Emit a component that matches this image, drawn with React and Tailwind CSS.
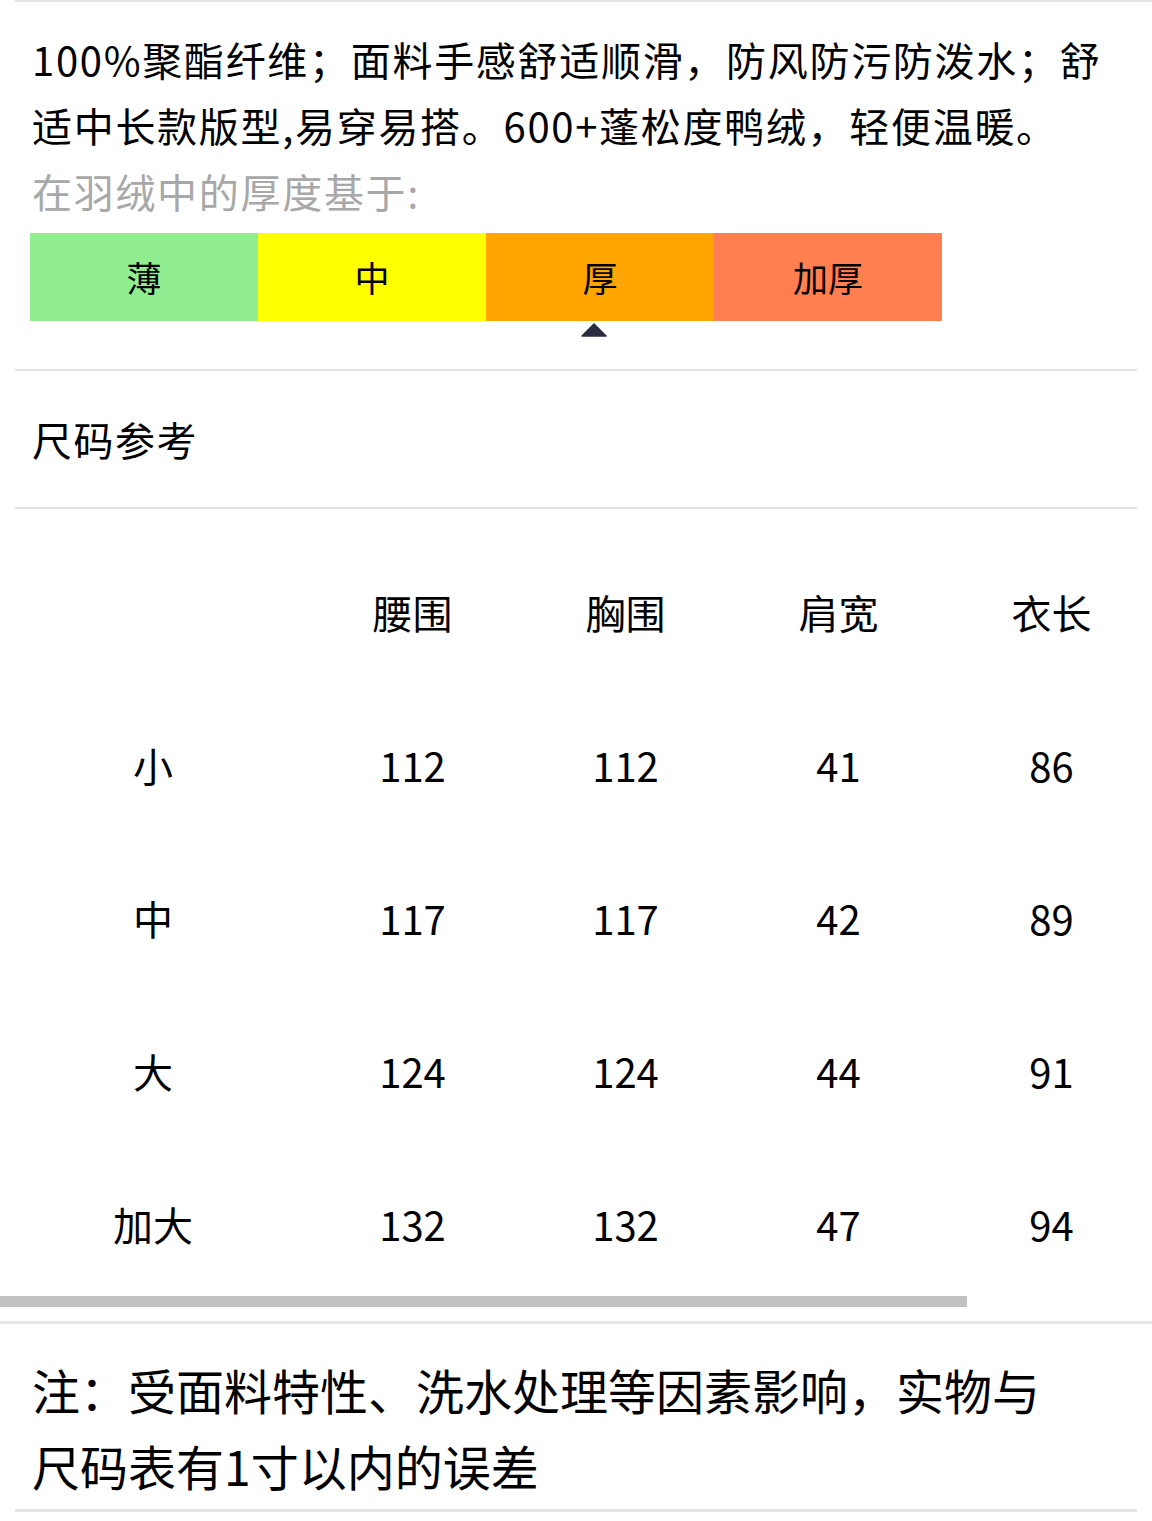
const font = { fontFamily: '"Noto Sans CJK SC", "Noto Sans", sans-serif' };

const levels = [
  { label: "薄", color: "bg-[#90ee90]" },
  { label: "中", color: "bg-[#ffff00]" },
  { label: "厚", color: "bg-[#ffa500]" },
  { label: "加厚", color: "bg-[#ff7f50]" },
];

const headers = ["", "腰围", "胸围", "肩宽", "衣长"];
const rows = [
  ["小", "112", "112", "41", "86"],
  ["中", "117", "117", "42", "89"],
  ["大", "124", "124", "44", "91"],
  ["加大", "132", "132", "47", "94"],
];

function Row({ cells }) {
  return (
    <div className="flex h-[153px] items-center">
      {cells.map((c, i) => (
        <div
          key={i}
          className={`${i === 0 ? "w-[306px]" : "w-[213px]"} shrink-0 text-center`}
        >
          {c}
        </div>
      ))}
    </div>
  );
}

export default function App() {
  return (
    <div className="w-[1152px] bg-white text-black" style={font}>
      <div className="ml-[15px] h-[2px] bg-[#e3e3e3]" />

      <div className="px-[32px] pt-[24px] text-[40px] leading-[66px] tracking-[1.7px]">
        <div className="whitespace-nowrap">100%聚酯纤维；面料手感舒适顺滑，防风防污防泼水；舒</div>
        <div className="whitespace-nowrap">适中长款版型,易穿易搭。600+蓬松度鸭绒，轻便温暖。</div>
        <div className="whitespace-nowrap text-[#a8a8a8]">在羽绒中的厚度基于:</div>
      </div>

      <div className="ml-[30px] mt-[9px] flex w-[912px]">
        {levels.map((l) => (
          <div
            key={l.label}
            className={`${l.color} flex h-[88px] w-[228px] items-center justify-center text-[35px]`}
          >
            {l.label}
          </div>
        ))}
      </div>
      <div className="ml-[580px] mt-[2px] h-[14px] w-[28px]">
        <svg width="28" height="14" viewBox="0 0 28 14">
          <path d="M14 1 L26 13 L2 13 Z" fill="#2b2d42" stroke="#2b2d42" strokeWidth="1.5" strokeLinejoin="round" />
        </svg>
      </div>

      <div className="mx-[15px] mt-[32px] h-[2px] bg-[#e3e3e3]" />
      <div className="flex h-[136px] items-center px-[32px] text-[40px] tracking-[1.5px]">尺码参考</div>
      <div className="mx-[15px] h-[2px] bg-[#e3e3e3]" />

      <div className="overflow-hidden pt-[26px] text-[40px]">
        <div className="w-[1372px]">
          <Row cells={headers} />
          {rows.map((r) => (
            <Row key={r[0]} cells={r} />
          ))}
        </div>
      </div>
      <div className="-mt-[4px] h-[11px] w-[967px] bg-[#c1c1c1]" />

      <div className="mt-[14px] h-[3px] bg-[#e6e6e6]" />
      <div className="px-[32px] pt-[27px] text-[48px] leading-[76px]">
        <div className="whitespace-nowrap">注：受面料特性、洗水处理等因素影响，实物与</div>
        <div className="whitespace-nowrap">尺码表有1寸以内的误差</div>
      </div>
      <div className="mx-[15px] mt-[6px] h-[3px] bg-[#e3e3e3]" />
      <div className="h-[8px]" />
    </div>
  );
}
